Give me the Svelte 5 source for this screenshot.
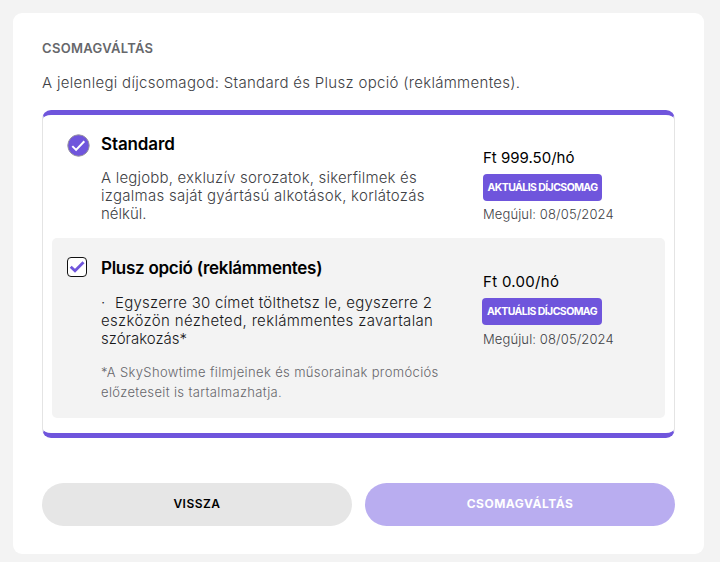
<script lang="ts">
	type Plan = {
		name: string;
		kind: 'base' | 'addon';
		lines: string[];
		note: string[];
		price: string;
		renews: string;
	};

	const plans: Plan[] = [
		{
			name: 'Standard',
			kind: 'base',
			lines: [
				'A legjobb, exkluzív sorozatok, sikerfilmek és',
				'izgalmas saját gyártású alkotások, korlátozás',
				'nélkül.',
			],
			note: [],
			price: 'Ft 999.50/hó',
			renews: '08/05/2024',
		},
		{
			name: 'Plusz opció (reklámmentes)',
			kind: 'addon',
			lines: [
				'Egyszerre 30 címet tölthetsz le, egyszerre 2',
				'eszközön nézheted, reklámmentes zavartalan',
				'szórakozás*',
			],
			note: ['*A SkyShowtime filmjeinek és műsorainak promóciós', 'előzeteseit is tartalmazhatja.'],
			price: 'Ft 0.00/hó',
			renews: '08/05/2024',
		},
	];
</script>

<main class="card">
	<h1>CSOMAGVÁLTÁS</h1>
	<p class="current">A jelenlegi díjcsomagod: Standard és Plusz opció (reklámmentes).</p>

	<section class="plans">
		{#each plans as plan}
			<article class="plan {plan.kind}">
				<div class="mark">
					{#if plan.kind === 'base'}
						<svg width="24" height="24" viewBox="0 0 24 24" fill="none">
							<circle cx="12.5" cy="12.5" r="10.7" fill="#6f55dc" stroke="#99959f" stroke-width="1" />
							<path d="M6.3 13.1l3.8 3.8 8.2-8.7" stroke="#fff" stroke-width="2" />
						</svg>
					{:else}
						<svg width="20" height="20" viewBox="0 0 20 20" fill="none">
							<rect x=".5" y=".5" width="19" height="19" rx="3.5" fill="#fff" stroke="#111" />
							<path d="M3.7 9.7l4.3 4.1 8.5-8.5" stroke="#6f55dc" stroke-width="2.8" />
						</svg>
					{/if}
				</div>
				<div class="info">
					<h2>{plan.name}</h2>
					<p class="desc">
						{#if plan.kind === 'addon'}<span class="dot">·</span>{/if}{#each plan.lines as line, i}{#if i > 0}<br />{/if}<span class="l{i}">{line}</span>{/each}
					</p>
					{#if plan.note.length}
						<p class="note">
							{#each plan.note as line, i}{#if i > 0}<br />{/if}{line}{/each}
						</p>
					{/if}
				</div>
				<div class="cost">
					<p class="price">{plan.price}</p>
					<span class="badge">AKTUÁLIS DÍJCSOMAG</span>
					<p class="renews">Megújul: {plan.renews}</p>
				</div>
			</article>
		{/each}
	</section>

	<div class="actions">
		<button class="back">VISSZA</button>
		<button class="change" disabled>CSOMAGVÁLTÁS</button>
	</div>
</main>

<style>
	:global(body) {
		background: #f3f3f3;
	}

	:global(#app) {
		display: flow-root;
	}

	.card {
		box-sizing: border-box;
		width: 691px;
		height: 541px;
		margin: 13px 0 0 13px;
		padding: 25px 29px 0;
		background: #fff;
		border-radius: 9px;
		font-family: Inter, 'Open Sans', sans-serif;
		font-weight: 300;
		color: #404145;
	}

	h1,
	h2,
	p {
		margin: 0;
		white-space: nowrap;
	}

	h1 {
		font-size: 13px;
		line-height: 20px;
		font-weight: 600;
		letter-spacing: 0.3px;
		color: #66676b;
	}

	.current {
		margin-top: 15px;
		font-size: 15px;
		line-height: 20px;
		letter-spacing: 0.3px;
	}

	.plans {
		box-sizing: border-box;
		height: 328px;
		margin-top: 17px;
		padding: 0 9px;
		border: 1px solid #e4e4e4;
		border-width: 5px 1px;
		border-top-color: #6f55dc;
		border-bottom-color: #6f55dc;
		border-radius: 9px;
	}

	.plan {
		box-sizing: border-box;
		display: grid;
		grid-template-columns: 34px 382px 1fr;
		padding-left: 15px;
	}

	.base {
		height: 123px;
		padding-top: 19px;
	}

	.addon {
		height: 180px;
		padding-top: 20px;
		background: #f3f3f3;
		border-radius: 5px;
	}

	.mark svg {
		display: block;
	}

	.base .mark svg {
		margin: -1px 0 0 -1px;
	}

	.addon .mark svg {
		margin-top: -1px;
	}

	h2 {
		font-size: 17px;
		line-height: 20px;
		font-weight: 600;
		letter-spacing: -0.28px;
		color: #000;
	}

	.base h2 {
		letter-spacing: -0.12px;
	}

	.desc {
		margin-top: 15px;
		font-size: 15px;
		line-height: 18px;
	}

	.l0 {
		letter-spacing: 0.19px;
	}

	.l1 {
		letter-spacing: 0.27px;
	}

	.addon .desc {
		margin-top: 16px;
		color: #18181a;
	}

	.addon .l0 {
		letter-spacing: 0.24px;
	}

	.addon .l1 {
		letter-spacing: 0.34px;
	}

	.dot {
		display: inline-block;
		width: 14px;
	}

	.note {
		margin-top: 14px;
		font-size: 13px;
		line-height: 20px;
		letter-spacing: 0.36px;
		color: #66666b;
	}

	.cost {
		padding-top: 14px;
	}

	.price {
		font-size: 15px;
		line-height: 20px;
		font-weight: 400;
		color: #000;
	}

	.addon .price {
		letter-spacing: 0.3px;
	}

	.badge {
		display: flex;
		align-items: center;
		justify-content: center;
		width: 119px;
		height: 27px;
		margin-top: 6px;
		border-radius: 4px;
		background: #6f55dc;
		color: #fff;
		font-size: 10.5px;
		font-weight: 700;
		letter-spacing: -0.58px;
		white-space: nowrap;
	}

	.addon .badge {
		width: 120px;
		margin-left: -1px;
	}

	.renews {
		margin-top: 3px;
		font-size: 13px;
		line-height: 20px;
		letter-spacing: 0.12px;
	}

	.addon .renews {
		margin-top: 4px;
	}

	.actions {
		display: flex;
		gap: 13px;
		margin-top: 45px;
	}

	button {
		flex: 1;
		height: 43px;
		padding: 0 0 2px;
		border: 0;
		border-radius: 22px;
		font: 600 12px Inter, 'Open Sans', sans-serif;
		letter-spacing: 0.5px;
	}

	.back {
		background: #e6e6e6;
		color: #000;
	}

	.change {
		background: #b9adf0;
		color: #fff;
		font-weight: 700;
	}
</style>
